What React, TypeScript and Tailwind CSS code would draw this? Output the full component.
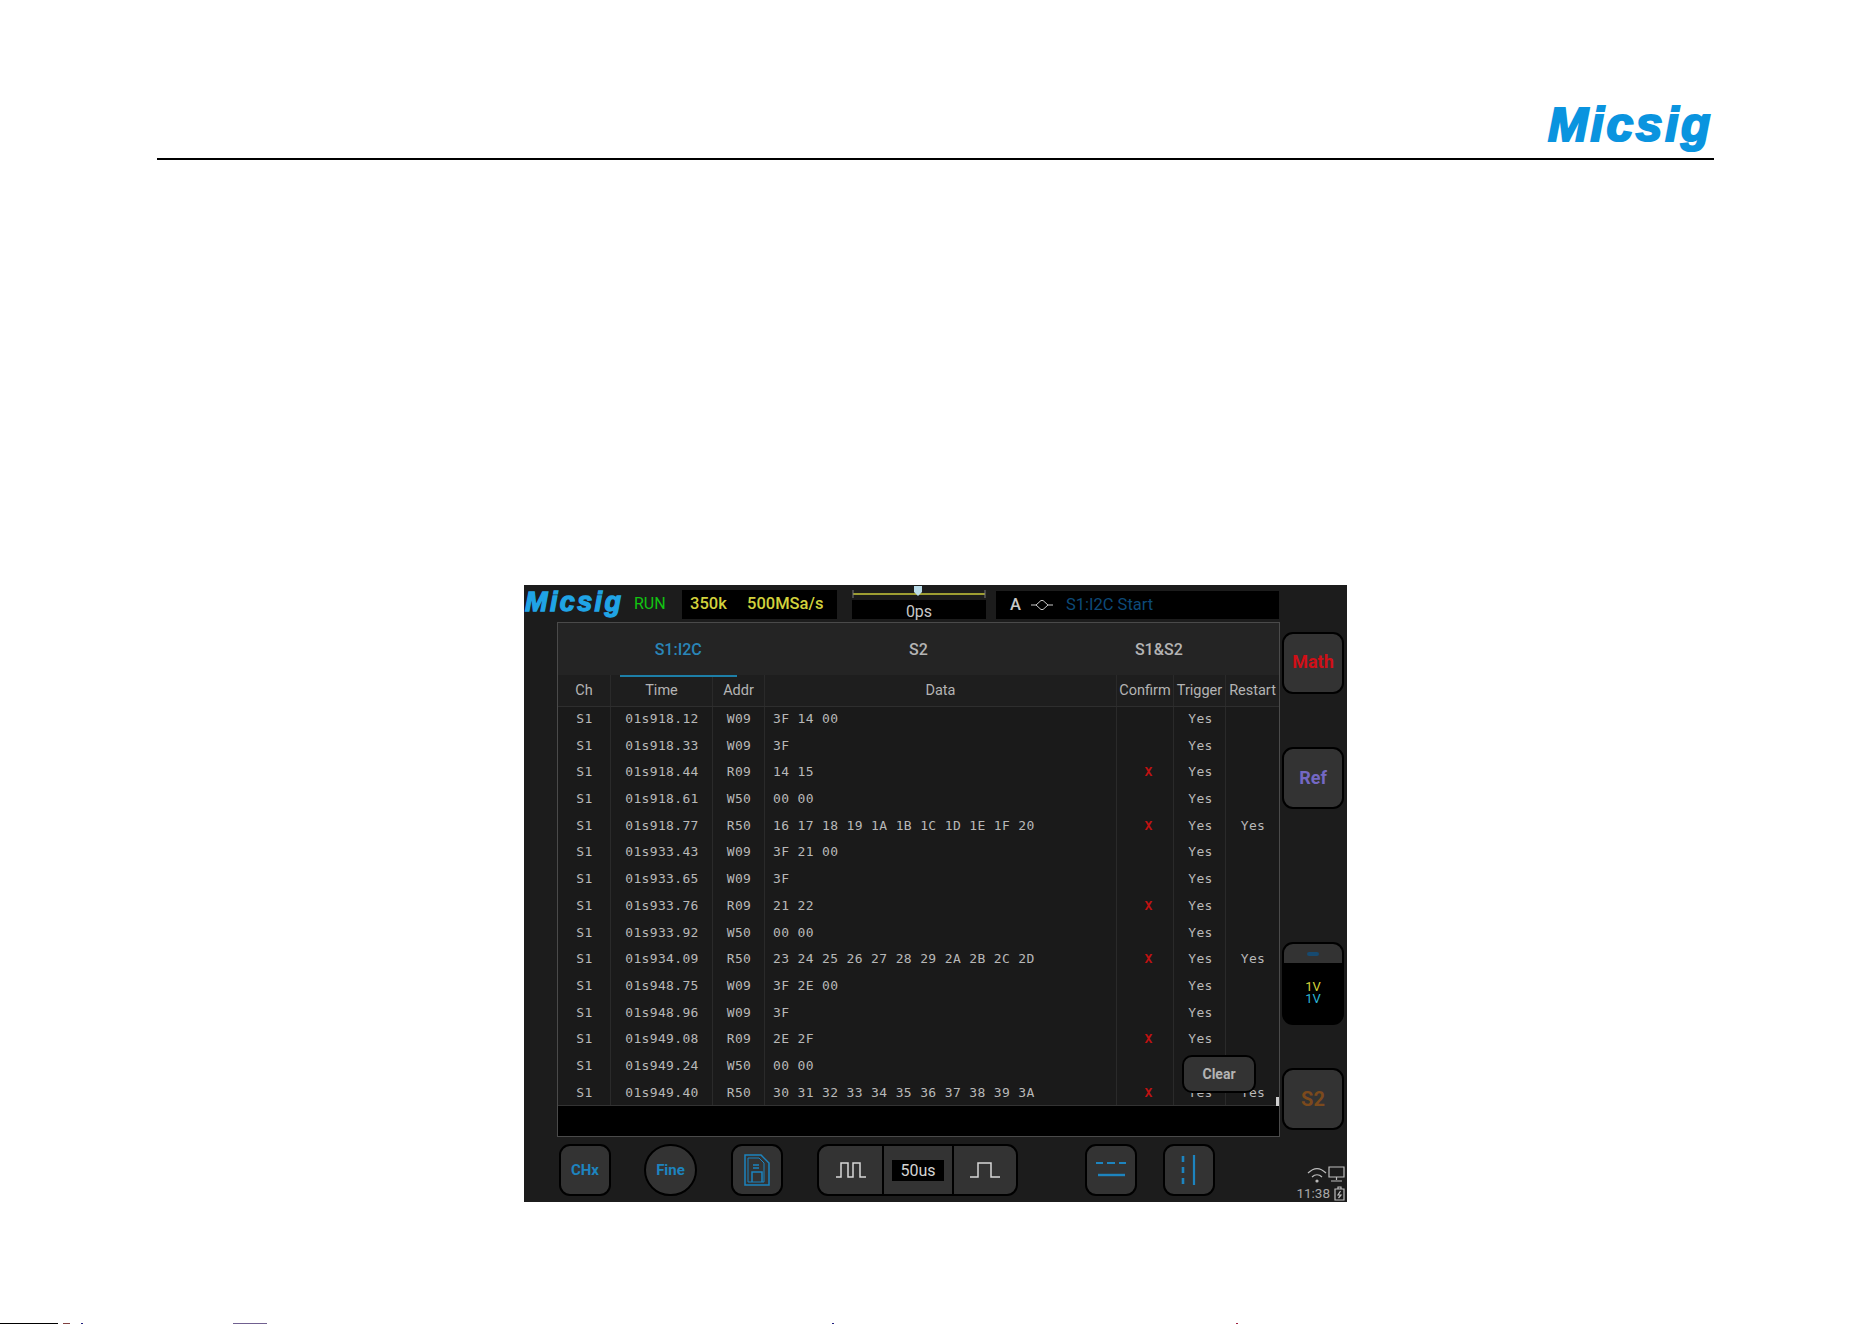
const SANS = "font-['Roboto','Liberation_Sans',sans-serif]";
const rows: [string, string, string, boolean, boolean][] = [
  ["01s918.12", "W09", "3F 14 00", false, false],
  ["01s918.33", "W09", "3F", false, false],
  ["01s918.44", "R09", "14 15", true, false],
  ["01s918.61", "W50", "00 00", false, false],
  ["01s918.77", "R50", "16 17 18 19 1A 1B 1C 1D 1E 1F 20", true, true],
  ["01s933.43", "W09", "3F 21 00", false, false],
  ["01s933.65", "W09", "3F", false, false],
  ["01s933.76", "R09", "21 22", true, false],
  ["01s933.92", "W50", "00 00", false, false],
  ["01s934.09", "R50", "23 24 25 26 27 28 29 2A 2B 2C 2D", true, true],
  ["01s948.75", "W09", "3F 2E 00", false, false],
  ["01s948.96", "W09", "3F", false, false],
  ["01s949.08", "R09", "2E 2F", true, false],
  ["01s949.24", "W50", "00 00", false, false],
  ["01s949.40", "R50", "30 31 32 33 34 35 36 37 38 39 3A", true, true],
];

const gridCols = "grid grid-cols-[53px_102px_52px_352px_57px_52px_53px]";
const sep = "border-r border-[#2a2a2a]";

function Btn({ className, children }: { className: string; children?: React.ReactNode }) {
  return (
    <div className={`flex items-center justify-center border-2 border-black bg-[#333333] font-bold ${className}`}>
      {children}
    </div>
  );
}

function Pulse({ wide }: { wide?: boolean }) {
  return wide ? (
    <svg width="30" height="16" viewBox="0 0 30 16" fill="none" stroke="#d8d8d8" strokeWidth="1.5">
      <path d="M0 15H8V1H21V15H30" />
    </svg>
  ) : (
    <svg width="30" height="16" viewBox="0 0 30 16" fill="none" stroke="#d8d8d8" strokeWidth="1.5">
      <path d="M0 15H5V1H12V15H17V1H24V15H30" />
    </svg>
  );
}

export default function App() {
  return (
    <div className={`h-[1324px] w-[1872px] overflow-hidden bg-white flex flex-col ${SANS}`}>
      {/* page header */}
      <div className="ml-[157px] w-[1557px] h-[160px] border-b-2 border-black flex justify-end items-start pt-[95px] pr-[1px]">
        <span className="font-['Liberation_Sans',sans-serif] font-bold italic text-[48px] leading-[60px] tracking-[2.6px] text-[#0a94df] [-webkit-text-stroke:2.2px_#0a94df]">
          Micsig
        </span>
      </div>

      {/* oscilloscope screen */}
      <div className="ml-[524px] mt-[425px] w-[823px] h-[617px] bg-[#1c1c1c] flex flex-col">
        {/* top bar */}
        <div className="h-[37px] flex items-start shrink-0">
          <span className="w-[104px] pl-[1px] font-['Liberation_Sans',sans-serif] font-bold italic text-[27px] leading-[34px] tracking-[2.4px] text-[#20a4e6] [-webkit-text-stroke:1.3px_#20a4e6]">
            Micsig
          </span>
          <span className="w-[54px] pl-[6px] pt-[6px] text-[16px] leading-[26px] text-[#12c412]">RUN</span>
          <div className="mt-[5px] w-[155px] h-[29px] bg-black flex items-center pl-[8px] text-[16.5px] text-[#d2d23c] font-medium">
            <span className="w-[57px]">350k</span>
            <span>500MSa/s</span>
          </div>
          <div className="ml-[15px] w-[134px] flex flex-col">
            <svg width="134" height="15" viewBox="0 0 134 15" fill="none">
              <path d="M1 9H133" stroke="#c9c93a" strokeWidth="1.3" />
              <path d="M1 5V13M133 5V13" stroke="#777" strokeWidth="1" />
              <path d="M62 1H70V7L66 11L62 7Z" fill="#b9dbe8" />
            </svg>
            <div className="h-[19px] bg-black text-center text-[16px] leading-[23px] text-[#c8c8c8]">0ps</div>
          </div>
          <div className="ml-[10px] mt-[6px] w-[283px] h-[28px] bg-black flex items-center pl-[14px] text-[16.5px]">
            <span className="text-[#c8c8c8] font-medium">A</span>
            <svg className="ml-[10px]" width="22" height="12" viewBox="0 0 22 12" fill="none" stroke="#c8c8c8" strokeWidth="1">
              <path d="M0 6H5L10 1.5H12L17 6L12 10.5H10L5 6M17 6H22" />
            </svg>
            <span className="ml-[13px] text-[#0d4a78]">S1:I2C Start</span>
          </div>
        </div>

        {/* middle */}
        <div className="flex h-[514px] shrink-0">
          <div className="ml-[33px] w-[723px] h-[515px] border border-[#4a4a4a] bg-[#1a1a1a] flex flex-col relative">
            {/* tabs */}
            <div className="h-[52px] shrink-0 bg-[#242424] grid grid-cols-3 text-[16px] leading-[54px] text-center text-[#b4b4b4] font-medium">
              <div className="relative text-[#2a86b8]">
                S1:I2C
                <div className="absolute left-[62px] bottom-0 w-[117px] h-[2px] bg-[#1d7fa8]" />
              </div>
              <div>S2</div>
              <div>S1&amp;S2</div>
            </div>
            {/* column heads */}
            <div className={`${gridCols} h-[32px] shrink-0 border-b border-[#2e2e2e] bg-[#1e1e1e] text-[14.5px] leading-[31px] text-center text-[#b4b4b4]`}>
              <div className={sep}>Ch</div>
              <div className={sep}>Time</div>
              <div className={sep}>Addr</div>
              <div className={sep}>Data</div>
              <div className={`${sep} whitespace-nowrap`}>Confirm</div>
              <div className={`${sep} whitespace-nowrap`}>Trigger</div>
              <div className="whitespace-nowrap">Restart</div>
            </div>
            {/* rows */}
            <div className="h-[398px] shrink-0 overflow-hidden font-['DejaVu_Sans_Mono','Liberation_Mono',monospace] text-[13px] tracking-[0.35px] text-[#b8b8b8]">
              {rows.map((r) => (
                <div key={r[0]} className={`${gridCols} h-[26.7px] leading-[24px] text-center`}>
                  <div className={`${sep} pl-[1px]`}>S1</div>
                  <div className={`${sep} pl-[1px]`}>{r[0]}</div>
                  <div className={`${sep} pl-[1px]`}>{r[1]}</div>
                  <div className={`${sep} text-left pl-[8px]`}>{r[2]}</div>
                  <div className={`${sep} pl-[7px] text-[#c01212] font-bold`}>{r[3] ? "X" : ""}</div>
                  <div className={`${sep} pl-[2px]`}>Yes</div>
                  <div className="pl-[1px]">{r[4] ? "Yes" : ""}</div>
                </div>
              ))}
            </div>
            {/* black strip */}
            <div className="flex-1 bg-black border-t border-[#333]" />
            {/* scroll thumb */}
            <div className="absolute right-0 top-[474px] w-[3px] h-[9px] bg-[#cfcfcf]" />
            {/* clear popup */}
            <Btn className="absolute left-[624px] top-[432px] w-[74px] h-[38px] rounded-[10px] text-[14px] text-[#b4b4b4]">
              Clear
            </Btn>
          </div>

          {/* right buttons */}
          <div className="ml-[2px] w-[65px] flex flex-col">
            <Btn className="mt-[10px] w-[62px] h-[62px] rounded-[11px] pb-[3px] text-[18px] text-[#d00f17]">Math</Btn>
            <Btn className="mt-[53px] w-[62px] h-[62px] rounded-[11px] pb-[2px] text-[18px] text-[#7468c4]">Ref</Btn>
            <div className="mt-[133px] w-[62px] h-[83px] rounded-[11px] border-2 border-black bg-black overflow-hidden flex flex-col">
              <div className="h-[19px] shrink-0 bg-[#333333] flex items-center justify-center">
                <span className="w-[12px] h-[4px] rounded-full bg-[#174a70]" />
              </div>
              <div className="flex-1 flex flex-col items-center justify-center text-[13px] leading-[12px]">
                <span className="text-[#d4d43a]">1V</span>
                <span className="text-[#2cb6d6]">1V</span>
              </div>
            </div>
            <Btn className="mt-[43px] w-[62px] h-[62px] rounded-[11px] text-[20px] text-[#7c4a1c]">S2</Btn>
          </div>
        </div>

        {/* bottom bar */}
        <div className="flex-1 flex items-start pl-[35px] pt-[8px] text-[#1d84bf]">
          <Btn className="w-[52px] h-[52px] rounded-[11px] text-[15px]">CHx</Btn>
          <Btn className="ml-[33px] w-[53px] h-[52px] rounded-full text-[15px]">Fine</Btn>
          <Btn className="ml-[34px] w-[52px] h-[52px] rounded-[11px]">
            <svg width="26" height="32" viewBox="0 0 26 32" fill="none" stroke="#1d84bf" strokeWidth="1.5">
              <path d="M1 1H17L25 9V31H1Z" />
              <path d="M4 4H15L20 9V28H4Z" strokeWidth="1" />
              <path d="M9 11H15M9 14H15" />
              <path d="M8 28V18H18V28" />
            </svg>
          </Btn>
          <div className="ml-[34px] w-[201px] h-[52px] rounded-[11px] border-2 border-black bg-[#333333] flex overflow-hidden">
            <div className="w-[65px] border-r-2 border-black flex items-center justify-center">
              <Pulse />
            </div>
            <div className="w-[68px] flex items-center justify-center">
              <span className="w-[52px] h-[21px] bg-black text-center text-[16px] leading-[21px] text-[#d4d4d4]">50us</span>
            </div>
            <div className="flex-1 border-l-2 border-black flex items-center justify-center">
              <Pulse wide />
            </div>
          </div>
          <Btn className="ml-[67px] w-[52px] h-[52px] rounded-[11px]">
            <svg width="32" height="24" viewBox="0 0 32 24" fill="none" stroke="#1d84bf">
              <path d="M1 5H8M12 5H20M24 5H31" strokeWidth="2" />
              <path d="M3 17H30" strokeWidth="2.4" />
            </svg>
          </Btn>
          <Btn className="ml-[26px] w-[52px] h-[52px] rounded-[11px]">
            <svg width="20" height="32" viewBox="0 0 20 32" fill="none" stroke="#1d84bf">
              <path d="M4 2V8M4 13V19M4 24V30" strokeWidth="2.6" />
              <path d="M15 1V31" strokeWidth="2.2" />
            </svg>
          </Btn>
          <div className="ml-auto mr-[2px] mt-[22px] flex flex-col items-end text-[#a8a8a8]">
            <svg width="38" height="20" viewBox="0 0 38 20" fill="none" stroke="#bdbdbd" strokeWidth="1.2">
              <path d="M1 7C7 1 13 1 19 7M5 11C8 8 12 8 15 11" />
              <circle cx="10" cy="15" r="1" fill="#bdbdbd" />
              <path d="M22 1H37V11H22ZM29.5 11V14M24 15H35" />
            </svg>
            <div className="flex items-center gap-[4px] text-[13.5px] leading-[15px]">
              <span>11:38</span>
              <svg width="11" height="15" viewBox="0 0 11 15" fill="none" stroke="#bdbdbd" strokeWidth="1.2">
                <path d="M1 3H10V14H1ZM4 3V1H7V3" />
                <path d="M6.5 5L4 9H7L4.5 12" />
              </svg>
            </div>
          </div>
        </div>
      </div>

      {/* stray footer marks */}
      <div className="mt-auto h-[1px] flex items-start">
        <div className="w-[58px] h-[1px] bg-black" />
        <div className="ml-[5px] w-[7px] h-[1px] bg-[#804040]" />
        <div className="ml-[11px] w-[2px] h-[1px] bg-[#202080]" />
        <div className="ml-[150px] w-[34px] h-[1px] bg-[#706090]" />
        <div className="ml-[565px] w-[2px] h-[1px] bg-[#202080]" />
        <div className="ml-[402px] w-[2px] h-[1px] bg-[#a02040]" />
      </div>
    </div>
  );
}
